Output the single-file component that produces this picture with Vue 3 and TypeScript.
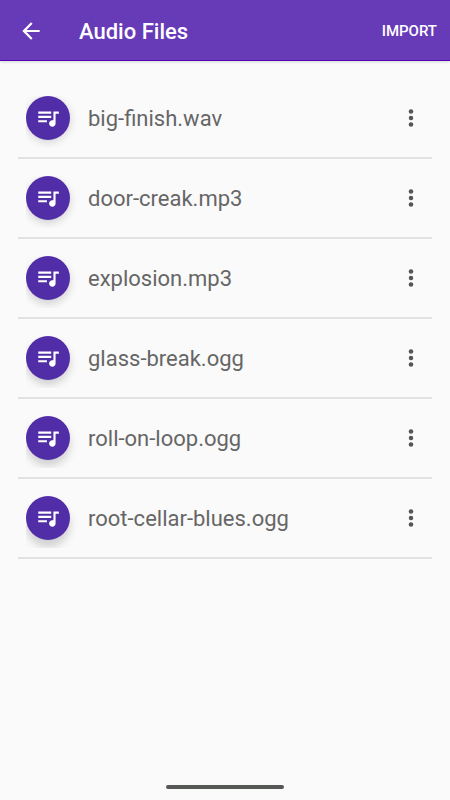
<script setup lang="ts">
interface AudioFile {
  name: string
}

const files: AudioFile[] = [
  { name: 'big-finish.wav' },
  { name: 'door-creak.mp3' },
  { name: 'explosion.mp3' },
  { name: 'glass-break.ogg' },
  { name: 'roll-on-loop.ogg' },
  { name: 'root-cellar-blues.ogg' },
]

const shadowFor = (index: number): Record<string, string> => ({
  '--drop': `${2 + index}px`,
})
</script>

<template>
  <div class="screen">
    <header class="bar">
      <button class="icon-button back" type="button" aria-label="Back">
        <svg class="icon" viewBox="0 0 24 24" aria-hidden="true">
          <path d="M20 11H7.83l5.59-5.59L12 4l-8 8 8 8 1.41-1.41L7.83 13H20v-2z" />
        </svg>
      </button>
      <h1 class="title">Audio Files</h1>
      <button class="import" type="button">IMPORT</button>
    </header>

    <main class="content">
      <ul class="list">
        <li v-for="(file, index) in files" :key="file.name" class="row">
          <span class="avatar-box">
            <span class="avatar" :style="shadowFor(index)">
              <svg class="icon" viewBox="0 0 24 24" aria-hidden="true">
                <path
                  d="M15 6H3v2h12V6zm0 4H3v2h12v-2zM3 16h8v-2H3v2zM17 6v8.18c-.31-.11-.65-.18-1-.18-1.66 0-3 1.34-3 3s1.34 3 3 3 3-1.34 3-3V8h3V6h-5z"
                />
              </svg>
            </span>
          </span>
          <span class="name">{{ file.name }}</span>
          <button class="icon-button more" type="button" :aria-label="`Options for ${file.name}`">
            <svg class="icon" viewBox="0 0 24 24" aria-hidden="true">
              <circle cx="12" cy="6" r="2.1" />
              <circle cx="12" cy="12" r="2.1" />
              <circle cx="12" cy="18" r="2.1" />
            </svg>
          </button>
        </li>
      </ul>
    </main>

    <footer class="system-nav">
      <span class="handle"></span>
    </footer>
  </div>
</template>

<style>
body {
  margin: 0;
  background: #fafafa;
}
</style>

<style scoped>
.screen {
  display: flex;
  flex-direction: column;
  box-sizing: border-box;
  min-height: 100vh;
  background: #fafafa;
  font-family: Roboto, "Liberation Sans", sans-serif;
}

.bar {
  display: flex;
  align-items: center;
  box-sizing: border-box;
  height: 61px;
  padding: 2px 13px 0 10px;
  border-bottom: 1px solid #5300b0;
  background: #673ab7;
  color: #fff;
  box-shadow: 0 1px 3px rgba(0, 0, 0, 0.14);
}

button {
  margin: 0;
  padding: 0;
  border: 0;
  background: none;
  color: inherit;
  font: inherit;
  cursor: pointer;
}

.icon {
  display: block;
  width: 26px;
  height: 26px;
  fill: currentColor;
}

.icon-button {
  display: flex;
  flex: none;
  align-items: center;
  justify-content: center;
  width: 42px;
  height: 42px;
}

.title {
  flex: 1;
  margin: 0 0 0 27px;
  padding-top: 2px;
  font-size: 22px;
  font-weight: 500;
  line-height: 28px;
}

.import {
  font-size: 15px;
  font-weight: 500;
  line-height: 28px;
}

.content {
  flex: 1;
  padding: 18px 18px 0;
}

.list {
  margin: 0;
  padding: 0;
  list-style: none;
}

.row {
  display: flex;
  align-items: center;
  box-sizing: border-box;
  height: 80px;
  padding-left: 8px;
  border-bottom: 2px solid #e2e2e2;
  color: #666;
}

/* Clips the soft shadow to the avatar's own cell. */
.avatar-box {
  flex: none;
  height: 52px;
  margin-top: 8px;
  padding-right: 10px;
  overflow: hidden;
}

.avatar {
  display: flex;
  align-items: center;
  justify-content: center;
  width: 44px;
  height: 44px;
  border-radius: 50%;
  background: #512da8;
  color: #fff;
  box-shadow: 0 var(--drop) 9px rgba(0, 0, 0, 0.17);
}

.name {
  flex: 1;
  min-width: 0;
  margin-left: 8px;
  padding-top: 2px;
  font-size: 22px;
  line-height: 28px;
}

.more {
  color: #555;
}

.system-nav {
  display: flex;
  justify-content: center;
  padding-bottom: 11px;
}

.handle {
  width: 118px;
  height: 4px;
  border-radius: 2px;
  background: #555755;
}
</style>
